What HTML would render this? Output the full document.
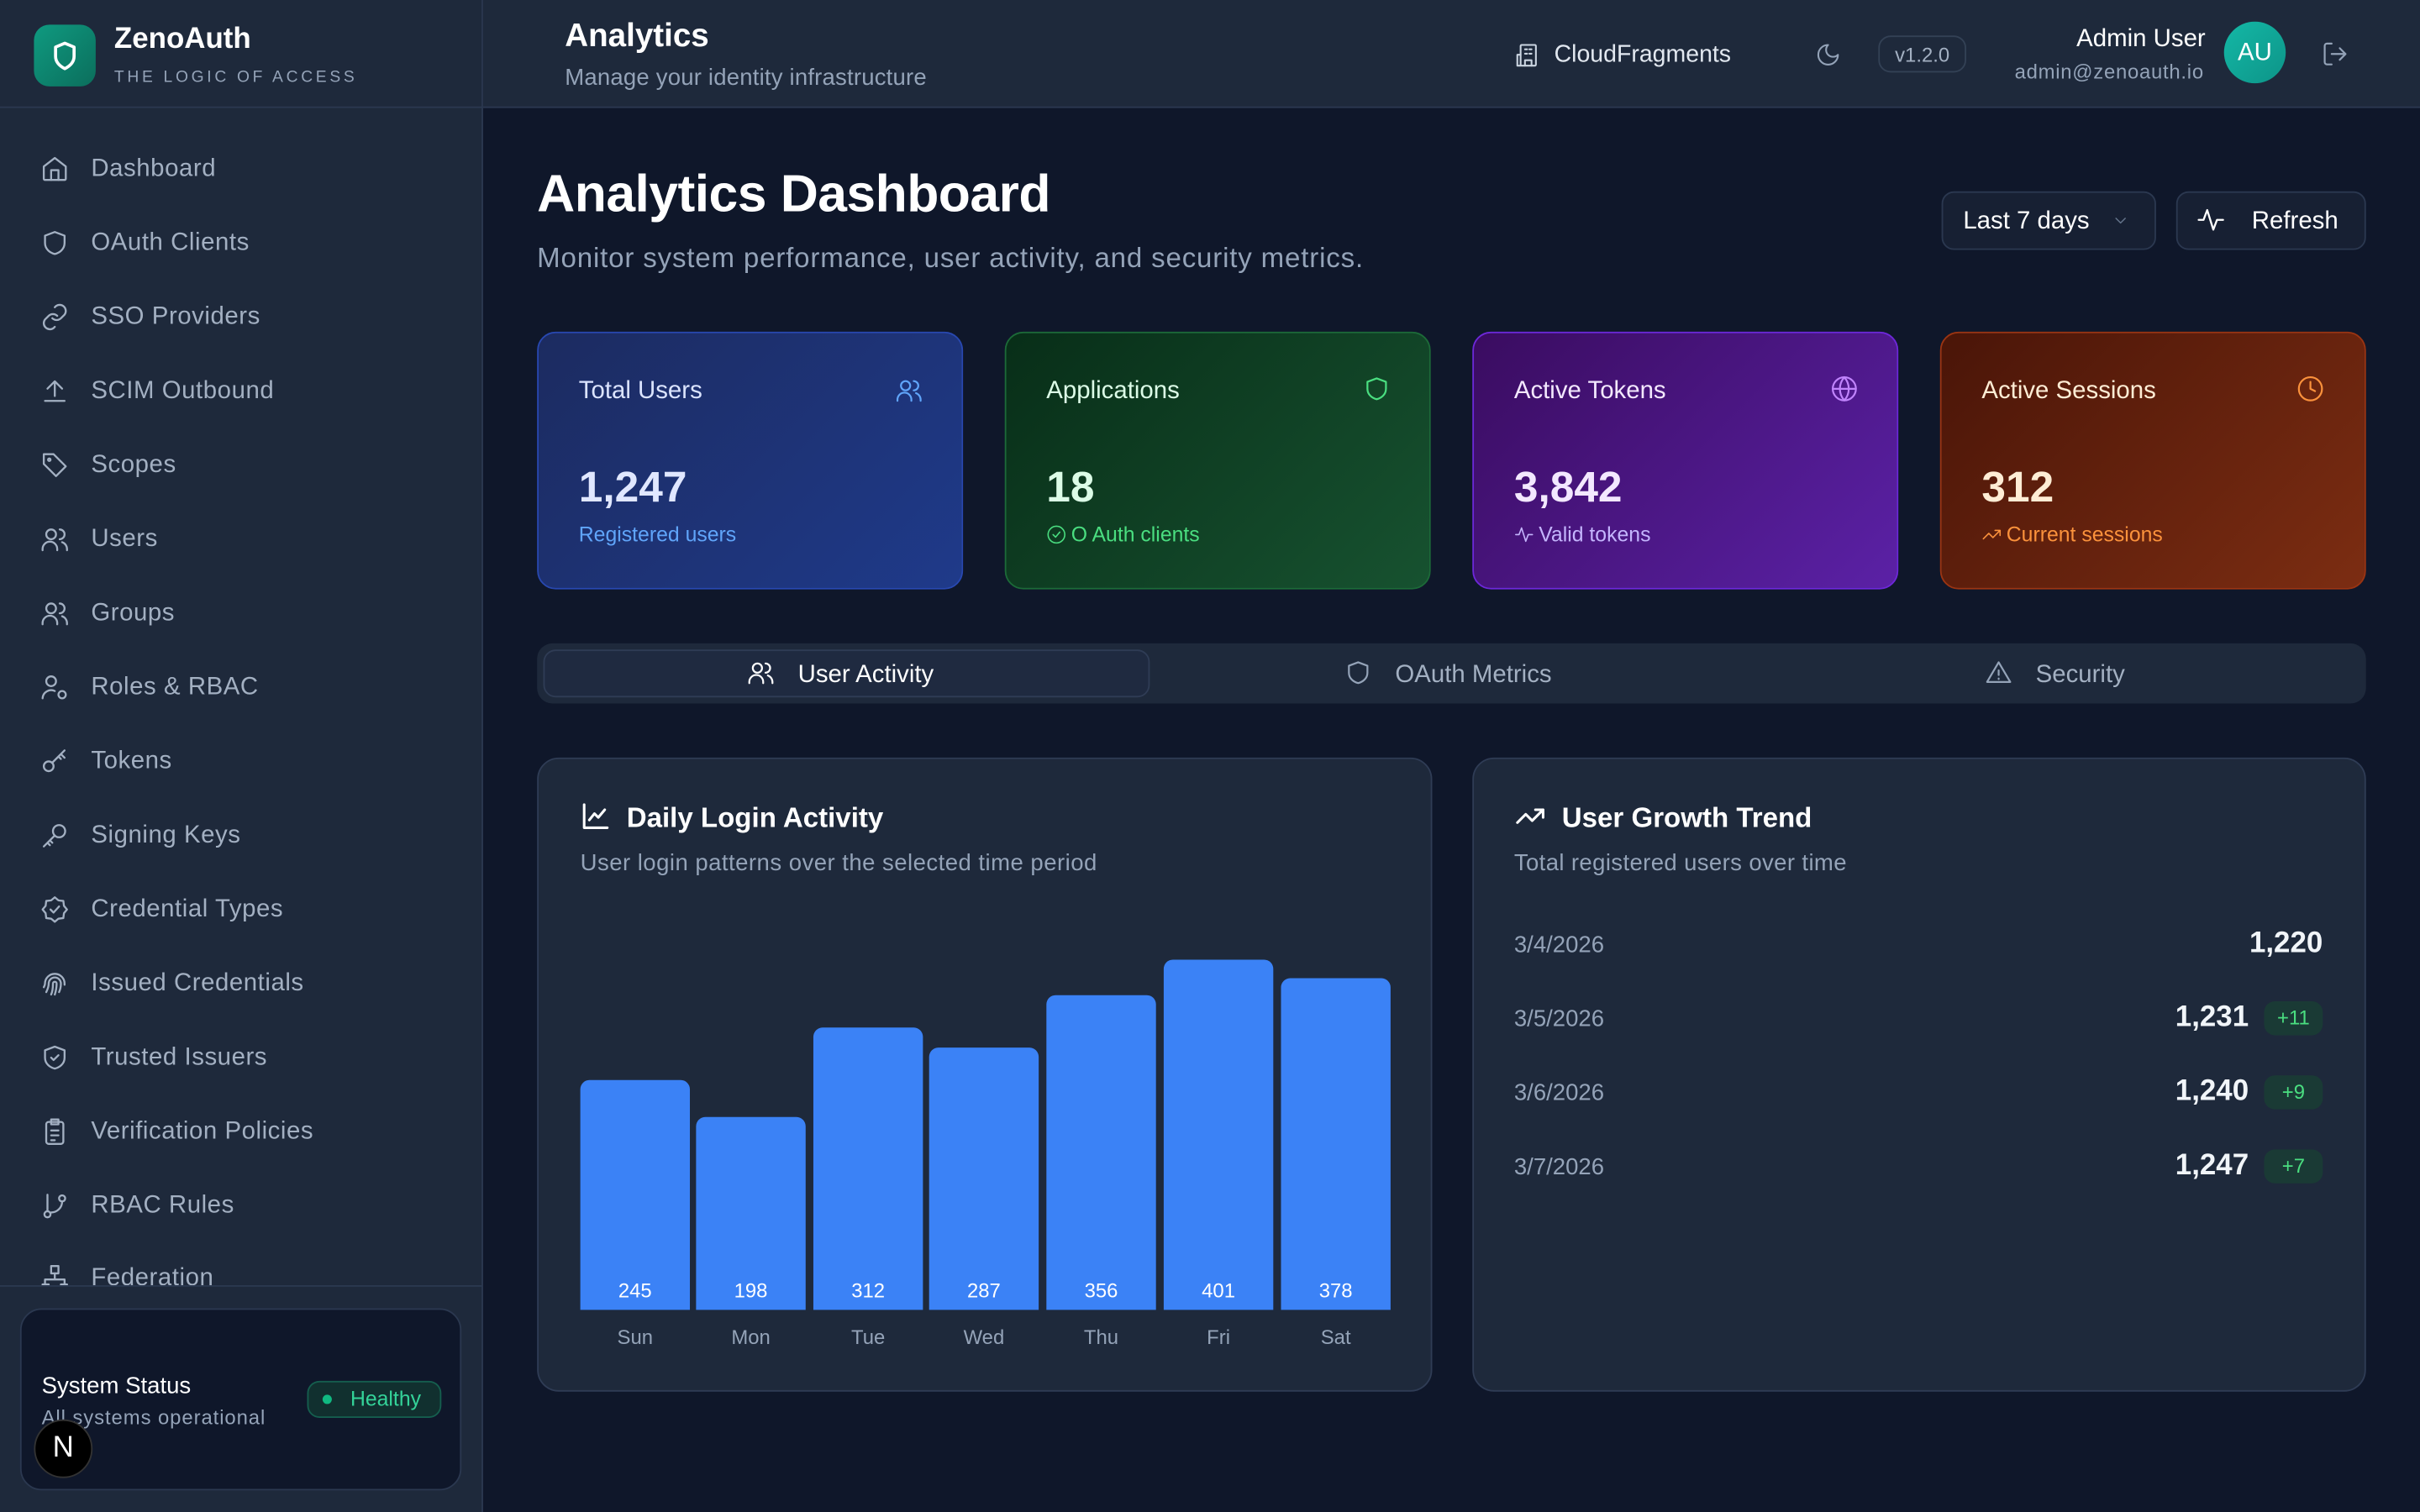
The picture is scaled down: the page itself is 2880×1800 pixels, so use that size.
<!DOCTYPE html>
<html><head><meta charset="utf-8">
<style>
*{box-sizing:border-box;margin:0;padding:0}
html,body{width:2880px;height:1800px;overflow:hidden;background:#0f172a}
#root{width:1568px;height:980px;transform:scale(1.836735);transform-origin:0 0;position:relative;font-family:"Liberation Sans",sans-serif;color:#f1f5f9;background:#0f172a}
.abs{position:absolute}
svg{display:block}
.ic{fill:none;stroke:currentColor;stroke-width:1.6;stroke-linecap:round;stroke-linejoin:round}
.side{left:0;top:0;width:313px;height:980px;background:#1e293b;border-right:1px solid #2b3850}
.nav{position:absolute;left:26px;display:flex;align-items:center;color:#a3b0c2;font-size:16px;letter-spacing:.3px}
.nav svg{width:19px;height:19px;margin-right:14px}
.card{position:absolute;top:215px;width:276px;height:167px;border-radius:12px;padding:0 26px}
.bar{position:absolute;bottom:131px;width:71px;background:#3b82f6;border-radius:6px 6px 0 0;color:#fff;font-size:13px;text-align:center}
.bar span{position:absolute;bottom:5px;left:0;right:0}
.day{position:absolute;top:859px;width:71px;text-align:center;font-size:13px;color:#94a3b8}
.row{position:absolute;left:981px;width:524px;display:flex;align-items:center;height:30px}
.row .d{font-size:15px;color:#94a3b8;flex:1}
.row .v{font-size:19px;font-weight:bold;color:#f1f5f9}
.row .b{margin-left:10px;width:38px;height:22px;border-radius:7px;background:#1a3a35;color:#4ade80;font-size:13px;text-align:center;line-height:22px}
</style></head><body><div id="root">

<div class="abs side"></div>
<div class="abs" style="left:0;top:69px;width:313px;height:1px;background:#2b3850"></div>
<div class="abs" style="left:22px;top:16px;width:40px;height:40px;border-radius:10px;background:linear-gradient(135deg,#0f9a80,#0b6e5c)">
<svg width="40" height="40" viewBox="0 0 40 40"><path class="ic" style="stroke:#fff;stroke-width:2" d="M20 12l6 2.5v6c0 4-3 6.5-6 8-3-1.5-6-4-6-8v-6z"/></svg></div>
<div class="abs" style="left:74px;top:15px;font-size:19px;font-weight:bold;color:#fff">ZenoAuth</div>
<div class="abs" style="left:74px;top:44px;font-size:10.5px;letter-spacing:2px;color:#94a3b8">THE LOGIC OF ACCESS</div>

<div class="nav" style="top:100px"><svg viewBox="0 0 24 24" class="ic"><path d="M3 10l9-7 9 7v10a1 1 0 0 1-1 1H4a1 1 0 0 1-1-1z"/><path d="M9 21v-8h6v8"/></svg>Dashboard</div>
<div class="nav" style="top:148px"><svg viewBox="0 0 24 24" class="ic"><path d="M12 3l8 3v6c0 5-4 8-8 9-4-1-8-4-8-9V6z"/></svg>OAuth Clients</div>
<div class="nav" style="top:196px"><svg viewBox="0 0 24 24" class="ic"><path d="M10 13a5 5 0 0 0 7 0l3-3a5 5 0 0 0-7-7l-1 1"/><path d="M14 11a5 5 0 0 0-7 0l-3 3a5 5 0 0 0 7 7l1-1"/></svg>SSO Providers</div>
<div class="nav" style="top:244px"><svg viewBox="0 0 24 24" class="ic"><path d="M12 16V4M6 10l6-6 6 6M4 20h16"/></svg>SCIM Outbound</div>
<div class="nav" style="top:292px"><svg viewBox="0 0 24 24" class="ic"><path d="M3 3h8l10 10-8 8L3 11z"/><circle cx="7.5" cy="7.5" r="1"/></svg>Scopes</div>
<div class="nav" style="top:340px"><svg viewBox="0 0 24 24" class="ic"><circle cx="9" cy="8" r="4"/><path d="M2 21v-1a6 6 0 0 1 12 0v1M16 4a4 4 0 0 1 0 8M22 21v-1a6 6 0 0 0-4-5.6"/></svg>Users</div>
<div class="nav" style="top:388px"><svg viewBox="0 0 24 24" class="ic"><circle cx="9" cy="8" r="4"/><path d="M2 21v-1a6 6 0 0 1 12 0v1M16 4a4 4 0 0 1 0 8M22 21v-1a6 6 0 0 0-4-5.6"/></svg>Groups</div>
<div class="nav" style="top:436px"><svg viewBox="0 0 24 24" class="ic"><circle cx="9" cy="7" r="4"/><path d="M2 21a7 7 0 0 1 10-6"/><circle cx="18" cy="18" r="3"/></svg>Roles &amp; RBAC</div>
<div class="nav" style="top:484px"><svg viewBox="0 0 24 24" class="ic"><circle cx="7" cy="16" r="4"/><path d="M10 13l10-10M17 6l3 3M15 8l2 2"/></svg>Tokens</div>
<div class="nav" style="top:532px"><svg viewBox="0 0 24 24" class="ic"><circle cx="15.5" cy="8.5" r="5"/><path d="M12 12l-9 9M6 18l2 2M8 16l2 2"/></svg>Signing Keys</div>
<div class="nav" style="top:580px"><svg viewBox="0 0 24 24" class="ic"><path d="M12 2l3 2.5 4 .5.5 4L22 12l-2.5 3-.5 4-4 .5L12 22l-3-2.5-4-.5-.5-4L2 12l2.5-3 .5-4 4-.5z"/><path d="M8.5 12l2.5 2.5 4.5-5"/></svg>Credential Types</div>
<div class="nav" style="top:628px"><svg viewBox="0 0 24 24" class="ic"><path d="M5 19c1-2 2-4 2-7a5 5 0 0 1 10 0c0 3-.5 5-1.5 7M9 21c1-2 1.5-5 1.5-9a1.5 1.5 0 0 1 3 0c0 4-.5 6-1.5 9M3 15c.6-1 1-2 1-3a8 8 0 0 1 16 0v1"/></svg>Issued Credentials</div>
<div class="nav" style="top:676px"><svg viewBox="0 0 24 24" class="ic"><path d="M12 3l8 3v6c0 5-4 8-8 9-4-1-8-4-8-9V6z"/><path d="M9 12l2 2 4-4"/></svg>Trusted Issuers</div>
<div class="nav" style="top:724px"><svg viewBox="0 0 24 24" class="ic"><rect x="5" y="4" width="14" height="18" rx="2"/><path d="M9 2h6v4H9zM9 11h6M9 15h6M9 19h3"/></svg>Verification Policies</div>
<div class="nav" style="top:772px"><svg viewBox="0 0 24 24" class="ic"><circle cx="6" cy="19" r="2.5"/><circle cx="18" cy="6" r="2.5"/><path d="M6 3v13.5M18 8.5A9 9 0 0 1 9 17.5"/></svg>RBAC Rules</div>
<div class="abs" style="left:0;top:790px;width:312px;height:43px;overflow:hidden"><div class="nav" style="top:29px"><svg viewBox="0 0 24 24" class="ic"><rect x="9" y="2" width="6" height="6"/><path d="M12 8v5M4 17v-4h16v4"/><rect x="2" y="17" width="5" height="5"/><rect x="17" y="17" width="5" height="5"/></svg>Federation</div></div>
<div class="abs" style="left:0;top:833px;width:312px;height:1px;background:#2b3850"></div>
<div class="abs" style="left:13px;top:848px;width:286px;height:118px;border-radius:14px;background:#0f172a;border:1px solid #2b3850"></div>
<div class="abs" style="left:27px;top:890px;font-size:15px;color:#fff">System Status</div>
<div class="abs" style="left:27px;top:911px;font-size:13px;color:#94a3b8;letter-spacing:.5px">All systems operational</div>
<div class="abs" style="left:199px;top:895px;width:87px;height:24px;border-radius:8px;background:#11302f;border:1px solid #155e4e;color:#34d399;font-size:13.5px;line-height:22px;padding-left:27px">Healthy</div>
<div class="abs" style="left:209px;top:904px;width:6px;height:6px;border-radius:50%;background:#10b981"></div>
<div class="abs" style="left:22px;top:920px;width:38px;height:38px;border-radius:50%;background:#000;border:1px solid #333;color:#fff;font-size:19px;text-align:center;line-height:36px">N</div>

<!-- header -->
<div class="abs" style="left:313px;top:0;width:1255px;height:70px;background:#1e293b;border-bottom:1px solid #2b3850"></div>
<div class="abs" style="left:366px;top:12px;font-size:21px;font-weight:bold;color:#fff">Analytics</div>
<div class="abs" style="left:366px;top:42px;font-size:15px;color:#94a3b8;letter-spacing:.1px">Manage your identity infrastructure</div>
<svg class="abs ic" style="left:981px;top:27px;color:#cbd5e1" width="17" height="17" viewBox="0 0 24 24"><rect x="6" y="3" width="14" height="19" rx="1"/><path d="M6 12H3v10h3M10 7h2M14 7h2M10 11h2M14 11h2M10 22v-5h6v5"/></svg>
<div class="abs" style="left:1007px;top:27px;font-size:15.5px;color:#e2e8f0">CloudFragments</div>
<svg class="abs ic" style="left:1176px;top:27px;color:#94a3b8" width="17" height="17" viewBox="0 0 24 24"><path d="M12 3a6 6 0 0 0 9 9 9 9 0 1 1-9-9z"/></svg>
<div class="abs" style="left:1217px;top:23px;width:57px;height:24px;border-radius:8px;border:1px solid #334155;color:#a3b0c2;font-size:13px;text-align:center;line-height:23px">v1.2.0</div>
<div class="abs" style="left:1240px;top:17px;width:189px;text-align:right;font-size:16px;color:#fff">Admin User</div>
<div class="abs" style="left:1240px;top:39px;width:188px;text-align:right;font-size:13px;color:#94a3b8;letter-spacing:.4px">admin@zenoauth.io</div>
<div class="abs" style="left:1441px;top:14px;width:40px;height:40px;border-radius:50%;background:linear-gradient(135deg,#14b8a6,#0d9488);color:#fff;font-size:16px;text-align:center;line-height:41px">AU</div>
<svg class="abs ic" style="left:1504px;top:26px;color:#94a3b8" width="18" height="18" viewBox="0 0 24 24"><path d="M9 21H5a2 2 0 0 1-2-2V5a2 2 0 0 1 2-2h4M16 17l5-5-5-5M21 12H9"/></svg>

<!-- title -->
<div class="abs" style="left:348px;top:107px;font-size:34px;font-weight:bold;color:#fff;letter-spacing:-.3px">Analytics Dashboard</div>
<div class="abs" style="left:348px;top:157px;font-size:18px;color:#94a3b8;letter-spacing:.45px">Monitor system performance, user activity, and security metrics.</div>
<div class="abs" style="left:1258px;top:124px;width:139px;height:38px;border-radius:8px;background:#172033;border:1px solid #2b3850;font-size:16px;line-height:37px;padding-left:13px;color:#fff">Last 7 days</div>
<svg class="abs ic" style="left:1368px;top:137px;color:#64748b" width="12" height="12" viewBox="0 0 24 24"><path d="M6 9l6 6 6-6"/></svg>
<div class="abs" style="left:1410px;top:124px;width:123px;height:38px;border-radius:8px;background:#172033;border:1px solid #2b3850;font-size:16px;line-height:37px;padding-left:48px;color:#fff">Refresh</div>
<svg class="abs ic" style="left:1423px;top:133px;color:#fff" width="19" height="19" viewBox="0 0 24 24"><path d="M2 12h4l3-8 5 16 3-8h5"/></svg>

<!-- stat cards -->
<div class="card" style="left:348px;background:linear-gradient(135deg,#1c2b60,#1f3a8a);border:1px solid #2848b0"></div>
<div class="card" style="left:651px;background:linear-gradient(135deg,#082e18,#175230);border:1px solid #1c6a38"></div>
<div class="card" style="left:954px;background:linear-gradient(135deg,#3a0c60,#5b21a6);border:1px solid #6d28d9"></div>
<div class="card" style="left:1257px;background:linear-gradient(135deg,#4a1508,#7c2d12);border:1px solid #9a3412"></div>

<div class="abs" style="left:375px;top:245px;font-size:16px;color:#dbe4ff">Total Users</div>
<div class="abs" style="left:375px;top:300px;font-size:28px;font-weight:bold;color:#e0e7ff">1,247</div>
<div class="abs" style="left:375px;top:339px;font-size:13.5px;color:#60a5fa">Registered users</div>
<svg class="abs ic" style="left:580px;top:244px;color:#60a5fa" width="18" height="18" viewBox="0 0 24 24"><circle cx="9" cy="8" r="4"/><path d="M2 21v-1a6 6 0 0 1 12 0v1M16 4a4 4 0 0 1 0 8M22 21v-1a6 6 0 0 0-4-5.6"/></svg>

<div class="abs" style="left:678px;top:245px;font-size:16px;color:#dcfce7">Applications</div>
<div class="abs" style="left:678px;top:300px;font-size:28px;font-weight:bold;color:#dcfce7">18</div>
<div class="abs" style="left:678px;top:339px;font-size:13.5px;color:#4ade80"><svg class="ic" style="display:inline;vertical-align:-2px;margin-right:3px" width="13" height="13" viewBox="0 0 24 24"><circle cx="12" cy="12" r="10"/><path d="M8 12l3 3 5-6"/></svg>O Auth clients</div>
<svg class="abs ic" style="left:883px;top:243px;color:#4ade80" width="18" height="18" viewBox="0 0 24 24"><path d="M12 3l8 3v6c0 5-4 8-8 9-4-1-8-4-8-9V6z"/></svg>

<div class="abs" style="left:981px;top:245px;font-size:16px;color:#f3e8ff">Active Tokens</div>
<div class="abs" style="left:981px;top:300px;font-size:28px;font-weight:bold;color:#f3e8ff">3,842</div>
<div class="abs" style="left:981px;top:339px;font-size:13.5px;color:#c4b5fd"><svg class="ic" style="display:inline;vertical-align:-2px;margin-right:3px" width="13" height="13" viewBox="0 0 24 24"><path d="M2 12h4l3-8 5 16 3-8h5"/></svg>Valid tokens</div>
<svg class="abs ic" style="left:1186px;top:243px;color:#c084fc" width="18" height="18" viewBox="0 0 24 24"><circle cx="12" cy="12" r="10"/><path d="M2 12h20M12 2a15 15 0 0 1 0 20M12 2a15 15 0 0 0 0 20"/></svg>

<div class="abs" style="left:1284px;top:245px;font-size:16px;color:#ffedd5">Active Sessions</div>
<div class="abs" style="left:1284px;top:300px;font-size:28px;font-weight:bold;color:#ffedd5">312</div>
<div class="abs" style="left:1284px;top:339px;font-size:13.5px;color:#fb923c"><svg class="ic" style="display:inline;vertical-align:-2px;margin-right:3px" width="13" height="13" viewBox="0 0 24 24"><path d="M22 7l-8.5 8.5-5-5L2 17M16 7h6v6"/></svg>Current sessions</div>
<svg class="abs ic" style="left:1488px;top:243px;color:#fb923c" width="18" height="18" viewBox="0 0 24 24"><circle cx="12" cy="12" r="10"/><path d="M12 6v6l4 2"/></svg>

<!-- tabs -->
<div class="abs" style="left:348px;top:417px;width:1185px;height:39px;border-radius:10px;background:#1e293b"></div>
<div class="abs" style="left:352px;top:421px;width:393px;height:31px;border-radius:8px;background:#1f2a40;border:1px solid #2f3c55"></div>
<svg class="abs ic" style="left:484px;top:427px;color:#fff" width="18" height="18" viewBox="0 0 24 24"><circle cx="9" cy="8" r="4"/><path d="M2 21v-1a6 6 0 0 1 12 0v1M16 4a4 4 0 0 1 0 8M22 21v-1a6 6 0 0 0-4-5.6"/></svg>
<div class="abs" style="left:517px;top:429px;font-size:16px;color:#fff">User Activity</div>
<svg class="abs ic" style="left:871px;top:427px;color:#94a3b8" width="18" height="18" viewBox="0 0 24 24"><path d="M12 3l8 3v6c0 5-4 8-8 9-4-1-8-4-8-9V6z"/></svg>
<div class="abs" style="left:904px;top:429px;font-size:16px;color:#a3b0c2">OAuth Metrics</div>
<svg class="abs ic" style="left:1286px;top:427px;color:#94a3b8" width="18" height="18" viewBox="0 0 24 24"><path d="M12 3L2 20h20z"/><path d="M12 10v4M12 17v.5"/></svg>
<div class="abs" style="left:1319px;top:429px;font-size:16px;color:#a3b0c2">Security</div>

<!-- chart cards -->
<div class="abs" style="left:348px;top:491px;width:580px;height:411px;border-radius:14px;background:#1e293b;border:1px solid #2f3c55"></div>
<div class="abs" style="left:954px;top:491px;width:579px;height:411px;border-radius:14px;background:#1e293b;border:1px solid #2f3c55"></div>

<svg class="abs ic" style="left:376px;top:519px;color:#fff;stroke-width:2" width="20" height="20" viewBox="0 0 24 24"><path d="M3 3v18h18M7 15l4-5 3 3 5-6"/></svg>
<div class="abs" style="left:406px;top:520px;font-size:18px;font-weight:bold;color:#fff">Daily Login Activity</div>
<div class="abs" style="left:376px;top:551px;font-size:15px;color:#94a3b8;letter-spacing:.25px">User login patterns over the selected time period</div>

<div class="bar" style="left:376px;height:149px"><span>245</span></div>
<div class="bar" style="left:451px;height:125px"><span>198</span></div>
<div class="bar" style="left:527px;height:183px"><span>312</span></div>
<div class="bar" style="left:602px;height:170px"><span>287</span></div>
<div class="bar" style="left:678px;height:204px"><span>356</span></div>
<div class="bar" style="left:754px;height:227px"><span>401</span></div>
<div class="bar" style="left:830px;height:215px"><span>378</span></div>
<div class="day" style="left:376px">Sun</div><div class="day" style="left:451px">Mon</div><div class="day" style="left:527px">Tue</div><div class="day" style="left:602px">Wed</div><div class="day" style="left:678px">Thu</div><div class="day" style="left:754px">Fri</div><div class="day" style="left:830px">Sat</div>

<svg class="abs ic" style="left:981px;top:519px;color:#fff;stroke-width:2" width="21" height="20" viewBox="0 0 24 24"><path d="M22 7l-8.5 8.5-5-5L2 17M16 7h6v6"/></svg>
<div class="abs" style="left:1012px;top:520px;font-size:18px;font-weight:bold;color:#fff">User Growth Trend</div>
<div class="abs" style="left:981px;top:551px;font-size:15px;color:#94a3b8;letter-spacing:.2px">Total registered users over time</div>
<div class="row" style="top:597px"><span class="d">3/4/2026</span><span class="v">1,220</span></div>
<div class="row" style="top:645px"><span class="d">3/5/2026</span><span class="v">1,231</span><span class="b">+11</span></div>
<div class="row" style="top:693px"><span class="d">3/6/2026</span><span class="v">1,240</span><span class="b">+9</span></div>
<div class="row" style="top:741px"><span class="d">3/7/2026</span><span class="v">1,247</span><span class="b">+7</span></div>

</div></body></html>
